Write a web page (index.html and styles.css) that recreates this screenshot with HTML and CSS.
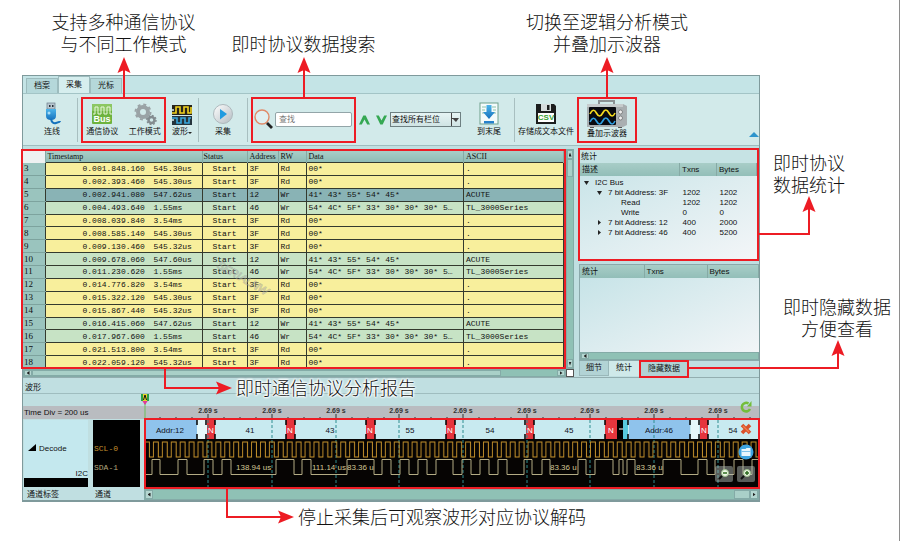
FILE: index.html
```html
<!DOCTYPE html>
<html lang="zh-CN">
<head>
<meta charset="utf-8">
<title>I2C 协议分析</title>
<link rel="stylesheet" href="styles.css">
</head>
<body>
<svg class="defs" aria-hidden="true">
  <defs>
    <linearGradient id="blue" x1="0" y1="0" x2="0" y2="1"><stop offset="0" stop-color="#4db4ea"/><stop offset="1" stop-color="#1672bd"/></linearGradient>
    <linearGradient id="metal" x1="0" y1="0" x2="1" y2="1"><stop offset="0" stop-color="#fff"/><stop offset="1" stop-color="#b3bcc2"/></linearGradient>
    <symbol id="up" viewBox="0 0 14 40"><path d="M7 10V40" stroke="#ed1c24" stroke-width="2"/><path d="M7 0L13.500 16L7 13L.5 16Z" fill="#ed1c24"/></symbol>
  </defs>
</svg>
<main class="app">
  <nav class="tabs">
    <button type="button">档案</button><button type="button" class="active">采集</button><button type="button">光标</button>
  </nav>

  <section class="toolbar">
    <button type="button" class="tool w50">
      <svg width="22" height="24" viewBox="0 0 22 24"><rect x="6" y="1" width="8" height="6" fill="#b9c7d0" stroke="#6c7e8a" stroke-width=".7"/><path d="M8 3h1.500v2H8zM11 3h1.500v2H11z" fill="#26323a"/><path d="M5 7h10v7q0 4-5 4t-5-4z" fill="url(#blue)"/><path d="M10 17q1 5 5 4t4-2" fill="none" stroke="#1672bd" stroke-width="2"/><circle cx="8" cy="11" r="1.500" fill="#a8dcf6"/></svg>
      <span>连线</span>
    </button>
    <i class="sep"></i>
    <div class="hot group w85">
      <button type="button" class="tool">
        <svg width="22" height="24" viewBox="0 0 22 24"><rect x="1" y="2" width="20" height="20" rx="1" fill="#6db33f"/><rect x="1" y="2" width="20" height="7" rx="1" fill="#8cc763"/><path d="M2 12h2V5h3v7h3V5h3v7h3V5h3v7h2" fill="none" stroke="#e9f7dd"/><text x="11" y="20" text-anchor="middle" class="bus">Bus</text></svg>
        <span>通信协议</span>
      </button>
      <button type="button" class="tool">
        <svg width="24" height="24" viewBox="0 0 24 24"><circle cx="10" cy="10" r="5" fill="none" stroke="#9aa3a6" stroke-width="4"/><circle cx="10" cy="10" r="7.500" fill="none" stroke="#9aa3a6" stroke-width="2" stroke-dasharray="3 2.900"/><circle cx="18.500" cy="18" r="3" fill="none" stroke="#838c90" stroke-width="2.500"/><circle cx="18.500" cy="18" r="4.500" fill="none" stroke="#838c90" stroke-width="1.500" stroke-dasharray="1.800 1.700"/></svg>
        <span>工作模式</span>
      </button>
      <div class="note above"><p>支持多种通信协议<br>与不同工作模式</p><svg width="14" height="40"><use href="#up"/></svg></div>
    </div>
    <button type="button" class="tool w32">
      <svg width="22" height="24" viewBox="0 0 22 24"><rect x="1" y="3" width="20" height="10" fill="#26241c"/><rect x="1" y="14" width="20" height="9" fill="#26343c"/><path d="M1 11h4V5h4v6h4V5h4v6h3V5" fill="none" stroke="#f2d21d" stroke-width="1.600"/><path d="M1 16h5v5h4v-5h4v5h4v-5h2" fill="none" stroke="#38a7dd" stroke-width="1.600"/><path d="M0 8h3M0 18h3" stroke="#d6eaea" stroke-width="1.500"/></svg>
      <span>波形<b class="caret"></b></span>
    </button>
    <i class="sep"></i>
    <button type="button" class="tool w48">
      <svg width="22" height="24" viewBox="0 0 22 24"><circle cx="11" cy="12" r="9.500" fill="url(#metal)" stroke="#aeb9bd"/><path d="M8 7l7 5-7 5.500z" fill="#219be0"/></svg>
      <span>采集</span>
    </button>
    <i class="sep"></i>
    <div class="hot group search w105">
      <svg width="22" height="24" viewBox="0 0 22 24"><circle cx="9" cy="9" r="7" fill="#dff0f1" stroke="#e08a68" stroke-width="1.400"/><path d="M14 15l5 5" stroke="#222" stroke-width="2.800"/></svg>
      <input type="text" placeholder="查找" aria-label="查找">
      <div class="note above"><p>即时协议数据搜索</p><svg width="14" height="40"><use href="#up"/></svg></div>
    </div>
    <button type="button" class="step" aria-label="上一个"><svg width="11" height="10" viewBox="0 0 11 10"><path d="M0 9.500L4.300.5h2.400L11 9.500H8.200L5.500 4.500 2.800 9.500z" fill="#35a853"/></svg></button>
    <button type="button" class="step" aria-label="下一个"><svg width="11" height="10" viewBox="0 0 11 10"><path d="M0 .5l4.300 9h2.400L11 .5H8.200L5.500 5.500 2.800.5z" fill="#35a853"/></svg></button>
    <div class="pick"><select aria-label="查找栏位"><option>查找所有栏位</option></select></div>
    <button type="button" class="tool w50">
      <svg width="20" height="24" viewBox="0 0 20 24"><rect x="1" y="1" width="18" height="21" fill="#f4fbfb" stroke="#6fa08c"/><path d="M3 5h4M3 8h3M3 11h3M13 5h4M14 8h3M14 11h3" stroke="#8fc3a8"/><path d="M7.500 3h5v7H16l-6 7-6-7h3.500z" fill="url(#blue)"/><path d="M5 19h10v2.500H5z" fill="#2681cb"/></svg>
      <span>到末尾</span>
    </button>
    <i class="sep"></i>
    <button type="button" class="tool w62">
      <svg width="20" height="24" viewBox="0 0 20 24"><path d="M0 2h18l2 2v18H0z" fill="#1b1d1d"/><path d="M5 2h10v7H5z" fill="#d6dddd"/><path d="M11 3h2.500v5H11z" fill="#1b1d1d"/><path d="M2 11h16v9H2z" fill="#fff"/><text x="10" y="18" text-anchor="middle" class="csv">CSV</text></svg>
      <span>存储成文本文件</span>
    </button>
    <div class="hot group w60">
      <button type="button" class="tool scope">
        <svg width="42" height="28" viewBox="0 0 42 28"><path d="M13 5V1h15v4" fill="none" stroke="#8b9193" stroke-width="2"/><path d="M1 4h36l4 2v19l-4 2H1z" fill="#a9afb1"/><path d="M1 4h36v3H1z" fill="#c6cbcc"/><path d="M4 27h4v1H4zM32 27h4v1h-4z" fill="#555"/><rect x="3" y="7" width="27" height="18" rx="1" fill="#080a10"/><path d="M4 14q3.200-7 6.400-1t6.300 0 6.300 0 6 0" fill="none" stroke="#f5dc20" stroke-width="1.700"/><path d="M4 22q3.200-7 6.400-1t6.300 0 6.300 0 6 0" fill="none" stroke="#2f9fe0" stroke-width="1.700"/><circle cx="34.500" cy="12" r="2" fill="#eee" stroke="#666" stroke-width=".7"/><circle cx="34.500" cy="18" r="2" fill="#eee" stroke="#666" stroke-width=".7"/></svg>
        <span>叠加示波器</span>
      </button>
      <div class="note above"><p>切换至逻辑分析模式<br>并叠加示波器</p><svg width="14" height="40"><use href="#up"/></svg></div>
    </div>
    <b class="collapse"></b>
  </section>

  <section class="split">
    <div class="report">
      <div class="hot report-table">
        <table>
          <colgroup><col class="c-no"><col class="c-time"><col class="c-status"><col class="c-addr"><col class="c-rw"><col><col class="c-ascii"></colgroup>
          <thead><tr><th></th><th>Timestamp</th><th>Status</th><th>Address</th><th>RW</th><th>Data</th><th>ASCII</th></tr></thead>
          <tbody>
            <tr><th>3</th><td><span>0.001.848.160</span><span>545.30us</span></td><td>Start</td><td>3F</td><td>Rd</td><td>00*</td><td>.</td></tr>
            <tr><th>4</th><td><span>0.002.393.460</span><span>545.30us</span></td><td>Start</td><td>3F</td><td>Rd</td><td>00*</td><td>.</td></tr>
            <tr class="sel"><th>5</th><td><span>0.002.941.080</span><span>547.62us</span></td><td>Start</td><td>12</td><td>Wr</td><td>41* 43* 55* 54* 45*</td><td>ACUTE</td></tr>
            <tr class="wr"><th>6</th><td><span>0.004.493.640</span><span>1.55ms</span></td><td>Start</td><td>46</td><td>Wr</td><td>54* 4C* 5F* 33* 30* 30* 30* 5…</td><td>TL_3000Series</td></tr>
            <tr><th>7</th><td><span>0.008.039.840</span><span>3.54ms</span></td><td>Start</td><td>3F</td><td>Rd</td><td>00*</td><td>.</td></tr>
            <tr><th>8</th><td><span>0.008.585.140</span><span>545.30us</span></td><td>Start</td><td>3F</td><td>Rd</td><td>00*</td><td>.</td></tr>
            <tr><th>9</th><td><span>0.009.130.460</span><span>545.32us</span></td><td>Start</td><td>3F</td><td>Rd</td><td>00*</td><td>.</td></tr>
            <tr class="wr"><th>10</th><td><span>0.009.678.060</span><span>547.60us</span></td><td>Start</td><td>12</td><td>Wr</td><td>41* 43* 55* 54* 45*</td><td>ACUTE</td></tr>
            <tr class="wr"><th>11</th><td><span>0.011.230.620</span><span>1.55ms</span></td><td>Start</td><td>46</td><td>Wr</td><td>54* 4C* 5F* 33* 30* 30* 30* 5…</td><td>TL_3000Series</td></tr>
            <tr><th>12</th><td><span>0.014.776.820</span><span>3.54ms</span></td><td>Start</td><td>3F</td><td>Rd</td><td>00*</td><td>.</td></tr>
            <tr><th>13</th><td><span>0.015.322.120</span><span>545.30us</span></td><td>Start</td><td>3F</td><td>Rd</td><td>00*</td><td>.</td></tr>
            <tr><th>14</th><td><span>0.015.867.440</span><span>545.32us</span></td><td>Start</td><td>3F</td><td>Rd</td><td>00*</td><td>.</td></tr>
            <tr class="wr"><th>15</th><td><span>0.016.415.060</span><span>547.62us</span></td><td>Start</td><td>12</td><td>Wr</td><td>41* 43* 55* 54* 45*</td><td>ACUTE</td></tr>
            <tr class="wr"><th>16</th><td><span>0.017.967.600</span><span>1.55ms</span></td><td>Start</td><td>46</td><td>Wr</td><td>54* 4C* 5F* 33* 30* 30* 30* 5…</td><td>TL_3000Series</td></tr>
            <tr><th>17</th><td><span>0.021.513.800</span><span>3.54ms</span></td><td>Start</td><td>3F</td><td>Rd</td><td>00*</td><td>.</td></tr>
            <tr><th>18</th><td><span>0.022.059.120</span><span>545.32us</span></td><td>Start</td><td>3F</td><td>Rd</td><td>00*</td><td>.</td></tr>
          </tbody>
        </table>
        <svg class="stamp" width="60" height="44" viewBox="0 0 60 44"><text x="5" y="12" transform="rotate(30 5 12)">SERIALNW</text></svg>
      </div>
      <div class="vscroll"><i class="btn up"></i><i class="thumb"></i><i class="btn down"></i></div>
      <div class="hscroll"><i class="btn left"></i><i class="thumb"></i><i class="btn right-btn"></i></div>
      <i class="corner"></i>
      <div class="note report-note"><svg width="70" height="30" viewBox="0 0 70 30"><path d="M1 0V19H58" fill="none" stroke="#ed1c24" stroke-width="2"/><path d="M68 19L52 12.500L55 19L52 25.500Z" fill="#ed1c24"/></svg><p>即时通信协议分析报告</p></div>
    </div>

    <aside class="side">
      <div class="hot stats">
        <h2>统计</h2>
        <table>
          <colgroup><col><col class="c-txns"><col class="c-bytes"></colgroup>
          <thead><tr><th>描述</th><th>Txns</th><th>Bytes</th></tr></thead>
          <tbody>
            <tr><td class="l1"><b class="open"></b>I2C Bus</td><td></td><td></td></tr>
            <tr><td class="l2"><b class="open"></b>7 bit Address: 3F</td><td>1202</td><td>1202</td></tr>
            <tr><td class="l3">Read</td><td>1202</td><td>1202</td></tr>
            <tr><td class="l3">Write</td><td>0</td><td>0</td></tr>
            <tr><td class="l2"><b class="shut"></b>7 bit Address: 12</td><td>400</td><td>2000</td></tr>
            <tr><td class="l2"><b class="shut"></b>7 bit Address: 46</td><td>400</td><td>5200</td></tr>
          </tbody>
        </table>
        <div class="note right stats-note"><svg width="60" height="42" viewBox="0 0 60 42"><path d="M0 39H50V12" fill="none" stroke="#ed1c24" stroke-width="2"/><path d="M50 1L56.500 17L50 14L43.500 17Z" fill="#ed1c24"/></svg><p>即时协议<br>数据统计</p></div>
      </div>
      <div class="detail">
        <table>
          <colgroup><col class="c-stat"><col class="c-txns2"><col></colgroup>
          <thead><tr><th>统计</th><th>Txns</th><th>Bytes</th></tr></thead>
        </table>
        <div class="hscroll"><i class="btn left"></i></div>
      </div>
      <nav class="side-tabs">
        <button type="button">细节</button><button type="button" class="active">统计</button>
        <div class="hot hide-tab">
          <button type="button">隐藏数据</button>
          <div class="note right hide-note"><svg width="160" height="32" viewBox="0 0 160 32"><path d="M0 29H149V12" fill="none" stroke="#ed1c24" stroke-width="2"/><path d="M149 1L155.500 17L149 14L142.500 17Z" fill="#ed1c24"/></svg><p>即时隐藏数据<br>方便查看</p></div>
        </div>
      </nav>
    </aside>
  </section>

  <h2 class="wave-title">波形</h2>
  <section class="wave">
    <div class="channels">
      <div class="time">Time Div = 200 us</div>
      <div class="decode"><p><b></b>Decode</p><small>I2C</small></div>
      <div class="names"><span>SCL-0</span><span>SDA-1</span></div>
    </div>
    <div class="plot">
      <svg class="signals" viewBox="144 395 615 95" preserveAspectRatio="xMinYMin meet" role="img" aria-label="I2C 波形">
        <defs>
          <pattern id="clk" x="145" y="442" width="8.920" height="17" patternUnits="userSpaceOnUse"><path d="M0 1H4.400V16H8.500V1H9" fill="none" stroke="#c7932c"/></pattern>
          <g id="edge"><path d="M0 421v5M0 435v5" stroke="#000" stroke-width="1.500"/></g>
          <g id="tick"><path d="M0 415v5M16 418v2M32 418v2M48 418v2" stroke="#333"/><path d="M0 421V488" stroke="#2f8d90" stroke-dasharray="3 2"/></g>
        </defs>
        <rect x="144" y="407" width="616" height="13" fill="#b9bcc0"/>
        <rect x="144" y="420" width="616" height="70" fill="#060403"/>
        <rect x="145" y="421" width="615" height="19" fill="#c8eaf0"/>
        <path d="M145 421h52v19h-52zM629 421h61v19h-61z" fill="#8fc3ec"/>
        <path d="M197 421h10v19h-10zM691 421h8v19h-8z" fill="#e6f8fa"/>
        <path d="M207 421h8v19h-8zM286 421h9v19h-9zM366 421h9v19h-9zM446 421h9v19h-9zM526 421h8v19h-8zM605 421h12v19h-12zM700 421h8v19h-8z" fill="#e5353d"/>
        <path d="M617 421h6v19h-6z" fill="#000"/><path d="M619 430h4" stroke="#fff"/><path d="M623 421h5v19h-5z" fill="#58c8dc"/>
        <use href="#edge" x="197"/><use href="#edge" x="206"/><use href="#edge" x="215"/><use href="#edge" x="286"/><use href="#edge" x="295"/><use href="#edge" x="366"/><use href="#edge" x="375"/><use href="#edge" x="446"/><use href="#edge" x="455"/><use href="#edge" x="525"/><use href="#edge" x="534"/><use href="#edge" x="605"/><use href="#edge" x="628"/><use href="#edge" x="690"/><use href="#edge" x="699"/><use href="#edge" x="708"/>
        <path d="M160 418v2M176 418v2M192 418v2" stroke="#333"/>
        <use href="#tick" x="208"/><use href="#tick" x="272"/><use href="#tick" x="336"/><use href="#tick" x="399"/><use href="#tick" x="463"/><use href="#tick" x="527"/><use href="#tick" x="590"/><use href="#tick" x="654"/><use href="#tick" x="718"/>
        <g class="ruler"><text x="208" y="414">2.69 s</text><text x="272" y="414">2.69 s</text><text x="336" y="414">2.69 s</text><text x="399" y="414">2.69 s</text><text x="463" y="414">2.69 s</text><text x="527" y="414">2.69 s</text><text x="590" y="414">2.69 s</text><text x="654" y="414">2.69 s</text><text x="718" y="414">2.69 s</text></g>
        <g class="bytes"><text x="170" y="434">Addr:12</text><text x="250" y="434">41</text><text x="330" y="434">43</text><text x="410" y="434">55</text><text x="490" y="434">54</text><text x="569" y="434">45</text><text x="659" y="434">Addr:46</text><text x="733" y="434">54</text></g>
        <g class="nack"><text x="211" y="434">N</text><text x="290" y="434">N</text><text x="370" y="434">N</text><text x="450" y="434">N</text><text x="530" y="434">N</text><text x="611" y="434">N</text><text x="704" y="434">N</text></g>
        <rect x="145" y="442" width="613" height="17" fill="url(#clk)"/>
        <path d="M145 475.500H152V460.500H160V475.500H178V460.500H187V475.500H204V460.500H213V475.500H222V460.500H231V475.500H276V460.500H294V475.500H302V460.500H311V475.500H347V460.500H374V475.500H382V460.500H391V475.500H400V460.500H409V475.500H418V460.500H427V475.500H436V460.500H453V475.500H462V460.500H471V475.500H480V460.500H489V475.500H498V460.500H507V475.500H524V460.500H532V475.500H542V460.500H550V475.500H578V460.500H586V475.500H595V460.500H613V475.500H619V460.500H623V475.500H627V460.500H635V475.500H663V460.500H681V475.500H698V460.500H707V475.500H715V460.500H724V475.500H734V460.500H743V475.500H752V460.500H758" fill="none" stroke="#b3ab84"/>
        <g class="span"><text x="236" y="471">138.94 us</text><text x="312" y="471">111.14 us</text><text x="347" y="471">83.36 u</text><text x="550" y="471">83.36 u</text><text x="636" y="471">83.36 u</text></g>
      </svg>
      <i class="hot plot-mark"></i>
      <svg class="cursor" width="10" height="26" viewBox="0 0 10 26"><path d="M5 8V26" stroke="#6bbf59"/><path d="M1 5h8l-4 6z" fill="#e0399a"/><rect x="1" y="0" width="8" height="7" fill="#e8d62c"/><path d="M1 0h2v7H1zM7 0h2v7H7z" fill="#2aa146"/><path d="M3.500 6L5 1l1.500 5" fill="none" stroke="#111"/></svg>
      <div class="actions">
        <button type="button" aria-label="刷新"><svg width="14" height="14" viewBox="0 0 14 14"><path d="M11 9A4.300 4.300 0 1 1 9.500 3.500" fill="none" stroke="#74bd3b" stroke-width="2.600"/><path d="M8 6.500L12.500 6.500V1z" fill="#74bd3b"/></svg></button>
        <button type="button" aria-label="删除"><svg width="14" height="14" viewBox="0 0 14 14"><path d="M3 3l8 8M11 3l-8 8" stroke="#d9502a" stroke-width="3.600"/><path d="M4 4l6 6" stroke="#f08050" stroke-width="1.200"/></svg></button>
        <button type="button" aria-label="窗口"><svg width="16" height="16" viewBox="0 0 16 16"><circle cx="8" cy="8" r="7.500" fill="#3ea3e0"/><path d="M3.500 5h4l1-1h4v8h-9z" fill="#e8f5fd"/><path d="M3.500 7h9v1h-9z" fill="#7cc1ea"/></svg></button>
        <div><button type="button" class="zoom" aria-label="缩小"><svg width="16" height="16" viewBox="0 0 16 16"><circle cx="9" cy="7" r="3.500" fill="#eef7e6" stroke="#9cbf8c"/><path d="M7 7h4" stroke="#2c6b1e" stroke-width="1.500"/><path d="M6 10l-3 3" stroke="#111" stroke-width="2"/></svg></button><button type="button" class="zoom" aria-label="放大"><svg width="16" height="16" viewBox="0 0 16 16"><circle cx="9" cy="7" r="3.500" fill="#eef7e6" stroke="#9cbf8c"/><path d="M7 7h4M9 5v4" stroke="#2c6b1e" stroke-width="1.500"/><path d="M6 10l-3 3" stroke="#111" stroke-width="2"/></svg></button></div>
      </div>
      <div class="note plot-note"><svg width="70" height="37" viewBox="0 0 70 37"><path d="M1 0V28H58" fill="none" stroke="#ed1c24" stroke-width="2"/><path d="M68 28L52 21.500L55 28L52 34.500Z" fill="#ed1c24"/></svg><p>停止采集后可观察波形对应协议解码</p></div>
    </div>
  </section>
  <footer class="foot"><span>通道标签</span><span>通道</span><div class="hscroll"><i class="btn left"></i><i class="thumb end"></i><i class="btn right-btn"></i></div></footer>
</main>
</body>
</html>
```
FILE: styles.css
```css
* { box-sizing: border-box; }

body {
  margin: 0;
  min-height: 541px;
  padding: 75px 139px 39px 22px;
  border-right: 1px solid #8e8e8e;
  background: #fff;
  color: #111;
  font: 8px/10px "Liberation Sans", "Noto Sans CJK SC", sans-serif;
}

.defs { position: absolute; width: 0; height: 0; }
h2, p { margin: 0; font-size: inherit; font-weight: normal; }
svg { display: block; flex: none; }
button { padding: 0; border: 0; background: none; color: inherit; font: inherit; }

.app { border: 1px solid #7f9a9c; border-bottom-width: 2px; background: #c0dfe1; }

/* annotations */
.hot { position: relative; }
.hot::after { content: ""; position: absolute; z-index: 2; inset: 0; border: 2px solid #ed1c24; pointer-events: none; }
.note { position: absolute; z-index: 3; color: #111; }
.note p { font: 300 18px/22px "Noto Sans CJK SC", sans-serif; white-space: nowrap; }
.above { bottom: 100%; left: 50%; display: flex; flex-direction: column; align-items: center; gap: 2px; transform: translateX(-50%); text-align: center; }
.above p { margin-bottom: 1px; }
.right { left: 100%; text-align: center; }
.right p { position: absolute; bottom: 100%; }

/* tabs */
.tabs { display: flex; align-items: flex-end; height: 18px; padding-left: 3px; background: #c4e4e6; border-bottom: 1px solid #a3c4c6; }
.tabs button { width: 32px; height: 15px; border: 1px solid #9dbcbe; border-bottom: 0; background: #b5d8da; }
.tabs .active { height: 17px; background: #d6eeee; }

/* toolbar */
.toolbar { position: relative; display: flex; align-items: center; height: 52px; padding-left: 4px; background: #d2eaea; border-bottom: 1px solid #9fbdbf; }
.tool { display: flex; flex-direction: column; align-items: center; gap: 1px; flex: 1; white-space: nowrap; }
.toolbar > .tool { flex: none; }
.group { display: flex; align-items: center; height: 46px; }
.w32 { width: 32px; }
.w48 { width: 48px; }
.w50 { width: 50px; }
.w60 { width: 60px; }
.w62 { width: 62px; }
.w85 { width: 85px; margin-left: 3px; }
.w105 { width: 105px; margin-left: 3px; }
.sep { width: 1px; height: 44px; background: #a8bfc0; }
.bus { font: bold 9px "Liberation Sans", sans-serif; fill: #fff; }
.csv { font: bold 8px "Liberation Sans", sans-serif; fill: #3aa335; }
.caret { display: inline-block; border: 2px solid transparent; border-top-color: #222; border-bottom: 0; }
.search { gap: 0; padding-left: 2px; }
.search input { width: 77px; height: 15px; padding: 0 3px; border: 1px solid #93a5a8; border-radius: 2px; background: #fff; font: inherit; }
.search input::placeholder { color: #777; opacity: 1; }
.step { width: 17px; display: flex; justify-content: center; }
.pick { position: relative; width: 71px; margin-right: 3px; }
.pick select { appearance: none; display: block; width: 100%; height: 15px; padding: 0 0 0 1px; border: 1px solid #6e8082; border-radius: 0; background: linear-gradient(#e6f4f4, #d0e4e4); font: inherit; color: #111; }
.pick::after { content: ""; position: absolute; top: 1px; right: 1px; bottom: 1px; width: 9px; background: #444; clip-path: polygon(0 0, 1px 0, 1px 5px, 8px 5px, 5px 9px, 2px 6px, 1px 6px, 1px 100%, 0 100%); }
.collapse { margin-left: auto; align-self: flex-end; margin-bottom: 8px; border: 5px solid transparent; border-top: 0; border-bottom-color: #2e94cc; }

/* report */
.split { display: grid; grid-template-columns: minmax(0, 1fr) 181px; gap: 4px; padding-top: 3px; border-bottom: 1px solid #93aeb0; }
.report { position: relative; display: grid; grid-template: 220px 8px / minmax(0, 1fr) 8px; }
.report-table { margin-left: -2px; padding: 2px; overflow: hidden; }
table { width: 100%; border-collapse: collapse; table-layout: fixed; }
th, td { padding: 0; font-weight: normal; text-align: left; white-space: nowrap; overflow: hidden; }
.report-table table { height: 218px; font: 8px/11px "Liberation Mono", monospace; }
.report-table th { padding-left: 1px; font: 9px/11px "Liberation Serif", serif; }
.report-table thead th { padding-left: 2px; border-right: 1px solid #86aaa5; background: linear-gradient(#a8cdc7, #8fbcb5); font-size: 8px; }
.report-table thead th:first-child { background: #eef1f1; }
.report-table thead th:nth-child(3) { padding-left: 1px; }
.report-table tbody th { border-bottom: 1px solid #7da39e; background: #9ac4be; }
.report-table td { padding-left: 2px; border: 1px solid #343a2e; background: #f8ef9c; }
.wr td { background: #c7e3c5; }
.sel td { background: #89b3b5; }
.report-table .wr td { background: #c7e3c5; }
.report-table .sel td { background: #89b3b5; }
.report-table td:nth-child(2) { padding-left: 37px; }
.report-table td:nth-child(3) { padding: 0; text-align: center; }
.report-table td span { display: inline-block; width: 71px; }
.report-table td span + span { width: 42px; }
.c-no { width: 22px; }
.c-time { width: 157px; }
.c-status { width: 45px; }
.c-addr { width: 31px; }
.c-rw { width: 28px; }
.c-ascii { width: 100px; }
.stamp { position: absolute; left: 190px; top: 106px; }
.stamp text { font: italic 11px "Liberation Sans", sans-serif; fill: #ffffff66; stroke: #55555544; stroke-width: 1px; }
.report-note { top: 219px; left: 141px; display: flex; }
.report-note svg { margin-top: 1px; }
.report-note p { margin: 8px 0 0 2px; text-shadow: 0 0 2px #fff, 1px 0 2px #fff, -1px 0 2px #fff, 0 1px 2px #fff, 0 -1px 2px #fff, 0 0 3px #fff; }

/* scroll bars */
.vscroll, .hscroll { display: flex; background: #8fc1b5; border: 1px solid #84aba7; }
.vscroll { flex-direction: column; }
.hscroll { height: 8px; justify-content: space-between; }
.btn { position: relative; width: 8px; background: #b4d6d0; border: 1px solid #84aba7; }
.vscroll .btn { width: auto; height: 9px; }
.btn::after { content: ""; position: absolute; inset: 0; margin: auto; width: 3px; height: 4px; background: #222; clip-path: polygon(100% 0, 0 50%, 100% 100%); }
.right-btn::after { clip-path: polygon(0 0, 100% 50%, 0 100%); }
.up::after { clip-path: polygon(50% 0, 100% 100%, 0 100%); }
.down::after { clip-path: polygon(0 0, 100% 0, 50% 100%); }
.thumb { background: #a9d0c8; border: 1px solid #84aba7; }
.vscroll .thumb { height: 18px; margin-bottom: auto; }
.report .hscroll .thumb { width: 469px; margin-right: auto; }
.corner { background: #fff; border: 1px solid #555; }

/* side panels */
.side { min-width: 0; }
.stats { height: 113px; padding: 2px; margin-top: -1px; background: linear-gradient(155deg, #c3e2e6, #f4f6f8); }
.stats h2 { line-height: 13px; padding-left: 1px; background: #c6e3e4; }
.side table { line-height: 10px; }
.side thead th { height: 13px; padding-left: 2px; border-right: 1px solid #86aaa5; background: linear-gradient(#a8cdc7, #92beb8); }
.side td { height: 10px; padding-left: 3px; }
.c-txns { width: 37px; }
.c-bytes { width: 40px; }
.side .l1 { padding-left: 4px; }
.side .l2 { padding-left: 17px; }
.side .l3 { padding-left: 41px; }
.open, .shut { display: inline-block; width: 5px; height: 4px; margin-right: 6px; background: #222; clip-path: polygon(0 0, 100% 0, 50% 100%); }
.shut { height: 5px; clip-path: polygon(20% 0, 80% 50%, 20% 100%); }
.stats tbody::before { content: ""; display: block; height: 2px; }
.detail { display: flex; flex-direction: column; justify-content: space-between; height: 97px; margin: 3px 0 0 1px; border: 1px solid #8ba9ab; border-right: 0; background: linear-gradient(155deg, #c3e2e6, #f4f6f8); }
.c-stat { width: 64px; }
.c-txns2 { width: 63px; }
.side-tabs { display: flex; margin-left: 1px; }
.side-tabs button { width: 30px; height: 15px; border: 1px solid #9ab8ba; border-top: 0; background: #b2d3d5; }
.side-tabs .active { background: #cfe9e9; border-color: #cfe9e9; }
.side-tabs .hide-tab { width: 50px; height: 18px; margin: -1px 0 -2px 0; padding: 1px; }
.side-tabs .hide-tab button { width: 100%; height: 16px; }
.stats-note { bottom: 24px; }
.stats-note p { left: 14px; }
.hide-note { bottom: 7px; }
.hide-note p { left: 94px; }

/* waveform */
.wave-title { height: 16px; padding-left: 2px; line-height: 20px; border-bottom: 1px solid #9fbdbf; }
.wave { display: grid; grid-template-columns: 121px minmax(0, 1fr); }
.channels { display: grid; grid-template: 13px 70px / 65px 52px; column-gap: 5px; align-content: end; background: linear-gradient(#c0dfe1 12px, #b9bcc0 12px, #b9bcc0 25px, #c0dfe1 25px); }
.time { grid-column: 1 / 3; padding-left: 1px; line-height: 14px; }
.decode { display: flex; flex-direction: column; margin: 1px 0 2px 1px; padding-top: 24px; background: #c4e8ee; border-bottom: 9px solid #000; }
.decode p { padding-left: 4px; }
.decode p b { display: inline-block; width: 8px; height: 7px; margin-right: 3px; background: #000; clip-path: polygon(100% 0, 100% 100%, 0 100%); }
.decode small { margin-top: auto; font-size: inherit; text-align: right; line-height: 9px; }
.names { display: flex; flex-direction: column; gap: 9px; margin: 1px 4px 2px 0; padding: 24px 0 0 1px; width: 47px; background: #000; color: #c2902e; font: 8px/10px "Liberation Mono", monospace; }
.names span + span { color: #b3a67c; }
.plot { position: relative; min-width: 0; background: linear-gradient(#c0dfe1 12px, #b9bcc0 12px, #b9bcc0 25px, #060403 25px); }
.signals { width: 100%; height: 95px; }
.signals text { font: 8px "Liberation Sans", sans-serif; fill: #112; text-anchor: middle; }
.signals .ruler text { font-size: 7px; font-weight: bold; fill: #333; }
.signals .nack text { fill: #fff; }
.signals .span text { text-anchor: start; fill: #d2c695; }
.plot-mark { position: absolute; inset: 24px -1px 0 0; }
.cursor { position: absolute; left: -4px; top: 0; }
.actions { position: absolute; z-index: 3; top: 6px; right: 4px; display: flex; flex-direction: column; align-items: flex-end; gap: 6px; }
.actions button { display: flex; justify-content: center; width: 18px; }
.actions > button + button { margin-top: 2px; }
.actions > div { display: flex; gap: 4px; }
.actions .zoom { border-radius: 2px; background: #b8c4be77; }
.plot-note { top: 95px; left: 82px; display: flex; }
.plot-note p { margin: 16px 0 0 2px; }
.foot { display: grid; grid-template-columns: 68px 53px minmax(0, 1fr); line-height: 11px; }
.foot span { padding-left: 4px; }
.foot .hscroll { height: 11px; }
.thumb.end { width: 16px; margin-left: auto; }
```
